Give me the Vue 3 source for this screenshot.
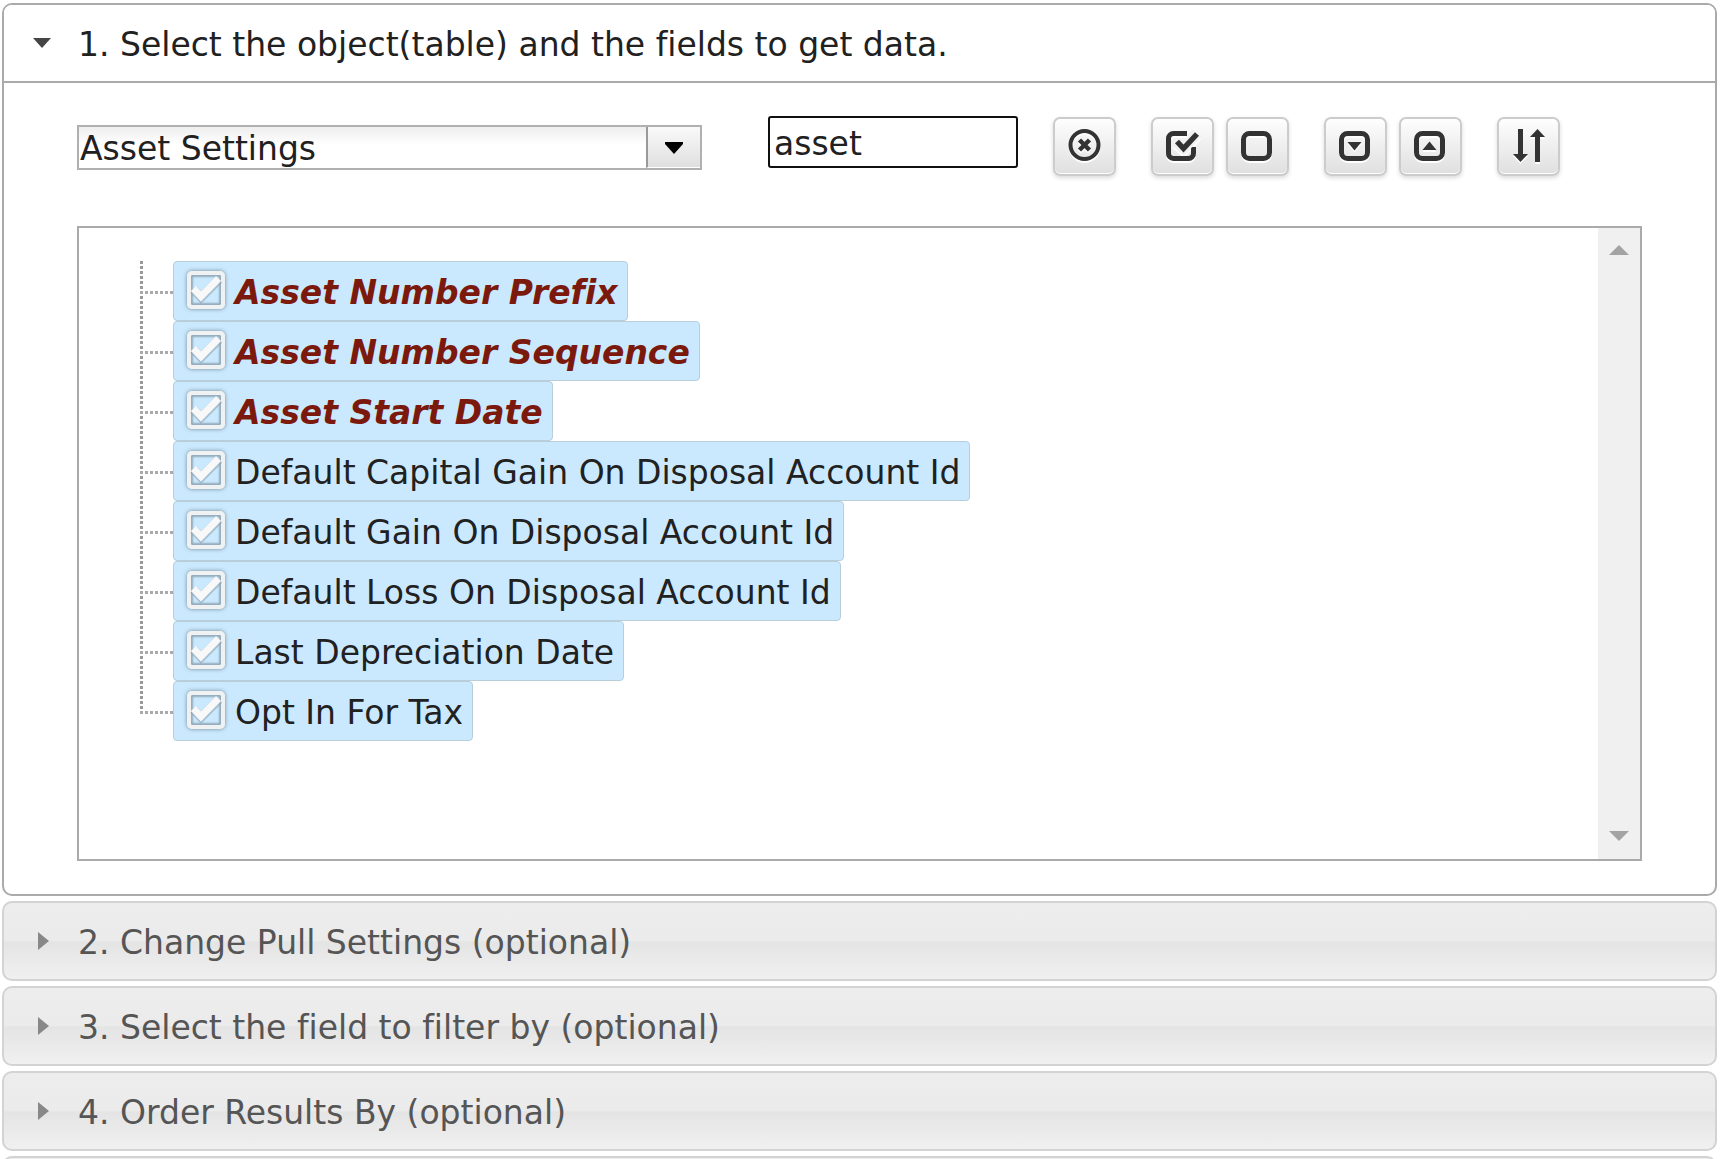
<script setup>
import { ref } from 'vue'

const object = ref('Asset Settings')
const filter = ref('asset')
const fields = ref([
  { name: 'Asset Number Prefix', required: true, checked: true },
  { name: 'Asset Number Sequence', required: true, checked: true },
  { name: 'Asset Start Date', required: true, checked: true },
  { name: 'Default Capital Gain On Disposal Account Id', required: false, checked: true },
  { name: 'Default Gain On Disposal Account Id', required: false, checked: true },
  { name: 'Default Loss On Disposal Account Id', required: false, checked: true },
  { name: 'Last Depreciation Date', required: false, checked: true },
  { name: 'Opt In For Tax', required: false, checked: true },
])
const sections = [
  '2. Change Pull Settings (optional)',
  '3. Select the field to filter by (optional)',
  '4. Order Results By (optional)',
]
</script>

<template>
  <main class="accordion">
    <section class="panel">
      <button class="head head-open" type="button" aria-expanded="true">
        <svg class="caret" viewBox="0 0 32 32"><path d="M7 11h18l-9 10z" fill="#454545" /></svg>
        <span>1. Select the object(table) and the fields to get data.</span>
      </button>
      <div class="body">
        <div class="toolbar">
          <div class="combo">
            <select v-model="object" aria-label="Object">
              <option>Asset Settings</option>
            </select>
            <span class="combo-arrow">
              <svg viewBox="0 0 18 12"><path d="M0 0h18v2l-9 10l-9-10z" fill="#000" /></svg>
            </span>
          </div>
          <input v-model="filter" class="filter" type="text" aria-label="Filter fields" />
          <div class="groups">
            <div class="group">
              <button class="tool" type="button" aria-label="Clear filter">
                <svg viewBox="1 0 36 36">
                  <circle cx="18.500" cy="16" r="14" fill="none" stroke="#333" stroke-width="4" />
                  <path d="M13.500 11l10 10M23.500 11l-10 10" stroke="#333" stroke-width="4.500" />
                </svg>
              </button>
            </div>
            <div class="group">
              <button class="tool" type="button" aria-label="Check all">
                <svg viewBox="2 1 36 36">
                  <path d="M24 5.500H10.500A5 5 0 0 0 5.500 10.500V25A5 5 0 0 0 10.500 30.500H25A5 5 0 0 0 30.500 25V19" fill="none" stroke="#333" stroke-width="5" />
                  <path d="M13 13.500L20.500 20.500L34 5.500" fill="none" stroke="#f1f1f1" stroke-width="11" />
                  <path d="M14 13.500L20.500 20.500L34 6" fill="none" stroke="#333" stroke-width="5.500" />
                </svg>
              </button>
              <button class="tool" type="button" aria-label="Uncheck all">
                <svg viewBox="2 1 36 36">
                  <rect x="5.500" y="5.500" width="26" height="25" rx="6" fill="none" stroke="#333" stroke-width="5" />
                </svg>
              </button>
            </div>
            <div class="group">
              <button class="tool" type="button" aria-label="Expand all">
                <svg viewBox="2 1 36 36">
                  <rect x="5.500" y="5.500" width="26" height="25" rx="6" fill="none" stroke="#333" stroke-width="5" />
                  <path d="M11.500 14h14l-7 8.500z" fill="#333" />
                </svg>
              </button>
              <button class="tool" type="button" aria-label="Collapse all">
                <svg viewBox="2 1 36 36">
                  <rect x="5.500" y="5.500" width="26" height="25" rx="6" fill="none" stroke="#333" stroke-width="5" />
                  <path d="M11.500 22h14l-7-8.500z" fill="#333" />
                </svg>
              </button>
            </div>
            <div class="group">
              <button class="tool" type="button" aria-label="Sort">
                <svg viewBox="0 0 36 36">
                  <path d="M7 0h5v25h5l-7.500 8l-7.500-8h5zM24 33V8h-5l7.500-8l7.500 8h-5v25z" fill="#333" />
                </svg>
              </button>
            </div>
          </div>
        </div>

        <div class="tree">
          <ul>
            <li v-for="field in fields" :key="field.name">
              <label class="node" :class="{ required: field.required }">
                <span class="check">
                  <input v-model="field.checked" type="checkbox" />
                  <svg v-if="field.checked" viewBox="0 0 40 40">
                    <path d="M7.500 19.500l7.500 8L33 9.500" fill="none" stroke="#8fa6b5" stroke-width="9" opacity=".6" />
                    <path d="M7.500 18.500l7.500 8L32.500 8.500" fill="none" stroke="#f8f8f8" stroke-width="7" />
                  </svg>
                </span>
                <span>{{ field.name }}</span>
              </label>
            </li>
          </ul>
          <div class="scrollbar" aria-hidden="true">
            <svg viewBox="0 0 20 10"><path d="M0 10h20L10 0z" fill="#a3a3a3" /></svg>
            <svg viewBox="0 0 20 10"><path d="M0 0h20L10 10z" fill="#a3a3a3" /></svg>
          </div>
        </div>
      </div>
    </section>

    <button v-for="title in sections" :key="title" class="head head-closed" type="button" aria-expanded="false">
      <svg class="caret" viewBox="0 0 32 32"><path d="M12 7v18l11-9z" fill="#888" /></svg>
      <span>{{ title }}</span>
    </button>
    <button class="head head-closed" type="button" aria-label="Next section" aria-expanded="false"></button>
  </main>
</template>

<style>
html,
body {
  height: 100%;
  overflow: hidden;
  background: #fff;
}
</style>

<style scoped>
* {
  box-sizing: border-box;
}

.accordion,
.accordion button,
.accordion input,
.accordion select {
  font-family: Verdana, 'DejaVu Sans', sans-serif;
  font-size: 33px;
  font-variant-ligatures: none;
  color: #212121;
}

.accordion {
  display: flex;
  flex-direction: column;
  gap: 5px;
  padding: 3px 7px 0 2px;
}

.panel {
  border: 2px solid #aaa;
  border-radius: 10px;
}

.head {
  display: flex;
  align-items: center;
  gap: 20px;
  width: 100%;
  height: 80px;
  padding: 0 22px;
  line-height: 40px;
  text-align: left;
}

.head span {
  padding-top: 4px;
}

.head-open {
  height: 78px;
  border: 0;
  border-bottom: 2px solid #aaa;
  border-radius: 8px 8px 0 0;
  background: #fff;
}

.accordion .head-closed {
  flex: none;
  border: 2px solid #d3d3d3;
  border-radius: 10px;
  background: linear-gradient(#ededed 0%, #ebebeb 50%, #e4e4e4 51%, #f0f0f0 100%);
  color: #555;
}

.caret {
  flex: none;
  width: 32px;
  height: 32px;
}

.body {
  padding: 33px 73px 33px;
}

.toolbar {
  display: flex;
  align-items: flex-start;
  height: 60px;
}

.combo {
  position: relative;
  width: 625px;
  height: 45px;
  margin: 9px 66px 0 0;
}

.combo select {
  width: 100%;
  height: 100%;
  padding: 2px 56px 0 1px;
  border: 2px solid #b0b0b0;
  border-radius: 0;
  outline: 0;
  appearance: none;
  background: linear-gradient(#eee, #fff 18px);
}

.combo-arrow {
  position: absolute;
  inset: 2px 2px 2px auto;
  display: flex;
  align-items: center;
  justify-content: center;
  width: 54px;
  padding-top: 2px;
  border-left: 2px solid #999;
  border-bottom: 1px solid #fff;
  background: linear-gradient(#fafafa, #dfdfdf);
  pointer-events: none;
}

.combo-arrow svg {
  width: 18px;
  height: 12px;
}

.filter {
  width: 250px;
  height: 52px;
  margin-right: 35px;
  padding: 2px 4px 0;
  border: 2px solid #101010;
  border-radius: 3px;
  outline: 0;
}

.groups {
  display: flex;
  gap: 35px;
  padding-top: 1px;
}

.group {
  display: flex;
  gap: 12px;
}

.tool {
  display: flex;
  align-items: center;
  justify-content: center;
  width: 63px;
  height: 59px;
  padding: 0;
  border: 2px solid #ccc;
  border-radius: 7px;
  background: linear-gradient(#fefefe, #dfdfdf);
  box-shadow: inset 0 -1px #fff, 0 2px 4px rgb(0 0 0 / 15%);
}

.tool svg {
  width: 36px;
  height: 36px;
  filter: drop-shadow(0 2px 0 #fff);
}

.tree {
  display: flex;
  justify-content: space-between;
  min-height: 635px;
  margin-top: 50px;
  border: 2px solid #aaa;
}

.tree ul {
  margin: 0;
  padding: 33px 0 0 61px;
  list-style: none;
}

.tree li {
  display: flex;
  height: 60px;
  padding-left: 33px;
  background:
    repeating-linear-gradient(90deg, #aaa 0 3px, transparent 3px 5px) 0 30px / 33px 3px no-repeat,
    repeating-linear-gradient(#999 0 3px, transparent 3px 5px) 0 0 / 3px 60px no-repeat;
}

.tree li:last-child {
  background:
    repeating-linear-gradient(90deg, #aaa 0 3px, transparent 3px 5px) 0 30px / 33px 3px no-repeat,
    repeating-linear-gradient(#999 0 3px, transparent 3px 5px) 0 0 / 3px 32px no-repeat;
}

.node {
  display: flex;
  align-items: center;
  gap: 9px;
  height: 60px;
  padding: 2px 9px 0 12px;
  border: 1px solid #b9cedb;
  border-radius: 4px;
  background: #cbe9fe;
  white-space: nowrap;
}

.required {
  color: #7b1a0c;
  font-style: italic;
  font-weight: bold;
}

.check {
  display: grid;
  width: 40px;
  height: 44px;
}

.check > * {
  grid-area: 1 / 1;
  width: 40px;
  height: 40px;
  margin: 0;
}

.check input {
  width: 38px;
  height: 38px;
  margin: 1px;
  border: 4px solid #eff1f2;
  border-radius: 5px;
  appearance: none;
  box-shadow: 0 0 4px #6f8796, inset 0 0 2px 2px #93abba;
}

.check svg {
  pointer-events: none;
}

.scrollbar {
  display: flex;
  flex-direction: column;
  justify-content: space-between;
  align-items: center;
  width: 42px;
  padding: 17px 0 18px;
  background: #f0f0f0;
}

.scrollbar svg {
  width: 20px;
  height: 10px;
}
</style>
